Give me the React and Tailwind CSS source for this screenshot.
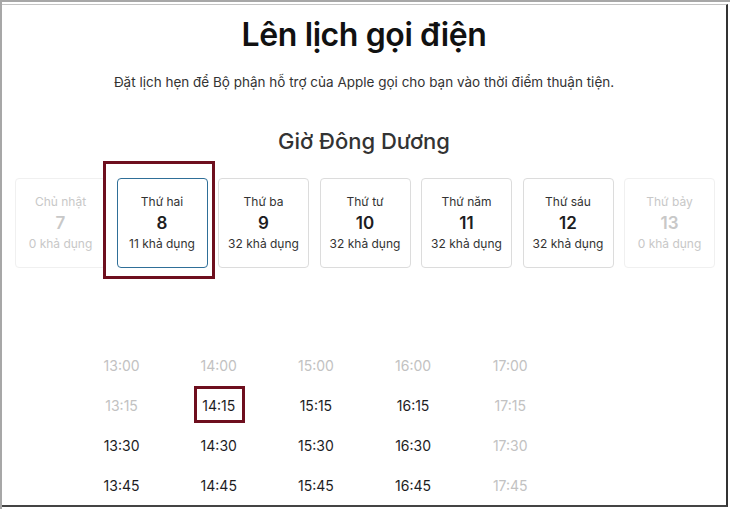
import React from 'react';

const days = [
  { label: 'Chủ nhật', date: 7, count: 0, disabled: true },
  { label: 'Thứ hai', date: 8, count: 11, selected: true },
  { label: 'Thứ ba', date: 9, count: 32 },
  { label: 'Thứ tư', date: 10, count: 32 },
  { label: 'Thứ năm', date: 11, count: 32 },
  { label: 'Thứ sáu', date: 12, count: 32 },
  { label: 'Thứ bảy', date: 13, count: 0, disabled: true },
];

// each row: [time, available, selected]
const rows = [
  [['13:00', false], ['14:00', false], ['15:00', false], ['16:00', false], ['17:00', false]],
  [['13:15', false], ['14:15', true, true], ['15:15', true], ['16:15', true], ['17:15', false]],
  [['13:30', true], ['14:30', true], ['15:30', true], ['16:30', true], ['17:30', false]],
  [['13:45', true], ['14:45', true], ['15:45', true], ['16:45', true], ['17:45', false]],
];

const DayCard = ({ day }) => {
  const text = day.disabled ? 'text-[#c8c8c8]' : 'text-[#333]';
  const border = day.selected
    ? 'border-[#2f6f98]'
    : day.disabled
    ? 'border-[#f0f0f0]'
    : 'border-[#dcdcdc]';
  return (
    <div className="relative">
      <div
        className={`flex h-[90px] w-[91px] flex-col items-center justify-center rounded-[4px] border ${border} ${text}`}
      >
        <div className="text-[12px] leading-[16px]">{day.label}</div>
        <div className={`mt-[3px] text-[17px] font-semibold leading-[20px] ${day.disabled ? '' : 'text-[#1d1d1f]'}`}>
          {day.date}
        </div>
        <div className="mt-[3px] text-[12px] leading-[16px]">{day.count} khả dụng</div>
      </div>
      {day.selected && (
        <div className="pointer-events-none absolute left-[-14px] top-[-17px] h-[118px] w-[112px] border-[3px] border-[#6e0f1e]" />
      )}
    </div>
  );
};

export default function App() {
  return (
    <div
      className="h-[509px] w-[730px] overflow-hidden bg-white"
      style={{ fontFamily: 'Inter, "Noto Sans", sans-serif' }}
    >
      <div className="h-[509px] w-[730px] border-l-2 border-t-2 border-[#a7a7a7]">
        <div className="mt-[2px] h-[503px] w-[726px] border-b-2 border-r-2 border-t border-b-[#444] border-r-[#333] border-t-[#c4c4c4]">
          <h1 className="pt-[10px] text-center text-[32px] font-semibold leading-[40px] tracking-[-0.4px] text-[#111]">
            Lên lịch gọi điện
          </h1>
          <p className="mt-[18px] text-center text-[13.5px] leading-[18px] text-[#333]">
            Đặt lịch hẹn để Bộ phận hỗ trợ của Apple gọi cho bạn vào thời điểm thuận tiện.
          </p>
          <h2 className="mt-[36px] text-center text-[22px] font-medium leading-[28px] text-[#333]">
            Giờ Đông Dương
          </h2>
          <div className="ml-[13px] mt-[23px] flex gap-[10.5px]">
            {days.map((d) => (
              <DayCard key={d.date} day={d} />
            ))}
          </div>
          <div className="ml-[71px] mt-[78px] grid w-[583px] grid-cols-6">
            {rows.map((row, ri) =>
              row
                .map(([t, avail, selected]) => (
                  <div key={t} className="flex h-[40px] items-center justify-center">
                    <span
                      className={`relative text-[14px] leading-[18px] ${avail ? 'text-[#1d1d1f]' : 'text-[#c2c2c2]'}`}
                    >
                      {t}
                      {selected && (
                        <span className="pointer-events-none absolute left-[-8px] top-[-11px] h-[37px] w-[51px] border-[3px] border-[#6e0f1e]" />
                      )}
                    </span>
                  </div>
                ))
                .concat(<div key={`e${ri}`} />)
            )}
          </div>
        </div>
      </div>
    </div>
  );
}
